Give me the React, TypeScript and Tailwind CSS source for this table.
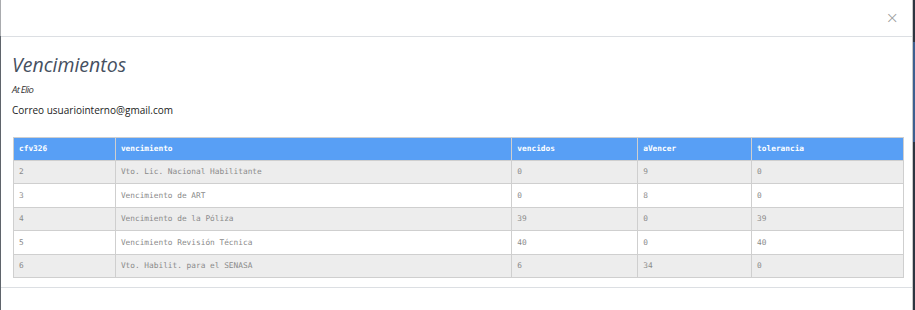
import React from "react";

const rows = [
  ["2", "Vto. Lic. Nacional Habilitante", "0", "9", "0"],
  ["3", "Vencimiento de ART", "0", "8", "0"],
  ["4", "Vencimiento de la Póliza", "39", "0", "39"],
  ["5", "Vencimiento Revisión Técnica", "40", "0", "40"],
  ["6", "Vto. Habilit. para el SENASA", "6", "34", "0"],
];

const headers = ["cfv326", "vencimiento", "vencidos", "aVencer", "tolerancia"];
const widths = ["w-[102px]", "w-[397px]", "w-[126px]", "w-[114px]", "w-[152px]"];

export default function App() {
  return (
    <div className="w-[915px] h-[310px] flex bg-[#2d3540] overflow-hidden">
      <div className="w-px flex flex-col">
        <div className="h-[36px] bg-[#a9abae]" />
        <div className="flex-1 bg-[#5f646b]" />
      </div>
      <div className="w-[912px] h-full bg-white flex flex-col border-r border-[#c8c8c8]">
        <div className="h-[37px] border-b border-[#dcdfe3] flex items-center justify-end pr-[13px]">
          <span
            className="text-[#999999] text-[16px] leading-none font-light"
            style={{ fontFamily: "'DejaVu Sans', sans-serif" }}
          >
            ×
          </span>
        </div>
        <div className="px-[11px] pt-[16px] flex flex-col h-[251px] border-b border-[#dcdfe3]">
          <div
            className="italic text-[19.5px] leading-[24px] text-[#46505f]"
            style={{ fontFamily: "'Open Sans', sans-serif" }}
          >
            Vencimientos
          </div>
          <div
            className="italic text-[9.5px] leading-[11px] mt-[7px] text-[#333] tracking-[-0.7px]"
            style={{ fontFamily: "'Open Sans', sans-serif" }}
          >
            At Elio
          </div>
          <div
            className="text-[10px] leading-[14px] mt-[8px] text-[#222]"
            style={{ fontFamily: "'Open Sans', sans-serif" }}
          >
            Correo usuariointerno@gmail.com
          </div>
          <table
            className="mt-[20px] ml-[1px] border-collapse text-[7.8px] w-[891px]"
            style={{ fontFamily: "'DejaVu Sans Mono', monospace" }}
          >
            <thead>
              <tr className="h-[23px] bg-[#589ff5]">
                {headers.map((h, i) => (
                  <th
                    key={h}
                    className={`${widths[i]} border border-[#cfcfcf] text-left font-bold text-white px-[5px] py-0`}
                  >
                    {h}
                  </th>
                ))}
              </tr>
            </thead>
            <tbody>
              {rows.map((r, ri) => (
                <tr key={ri} className={`h-[23.4px] ${ri % 2 === 0 ? "bg-[#ededed]" : "bg-white"}`}>
                  {r.map((c, ci) => (
                    <td
                      key={ci}
                      className="border border-[#cfcfcf] text-[#8a8a8a] px-[5px] py-0"
                    >
                      {c}
                    </td>
                  ))}
                </tr>
              ))}
            </tbody>
          </table>
        </div>
        <div className="flex-1" />
      </div>
      <div className="flex-1 flex flex-col">
        <div className="h-[42px] bg-[#2d3540]" />
        <div className="h-[100px] bg-[#3e5f8f]" />
        <div className="flex-1 bg-[#2d3540]" />
      </div>
    </div>
  );
}
